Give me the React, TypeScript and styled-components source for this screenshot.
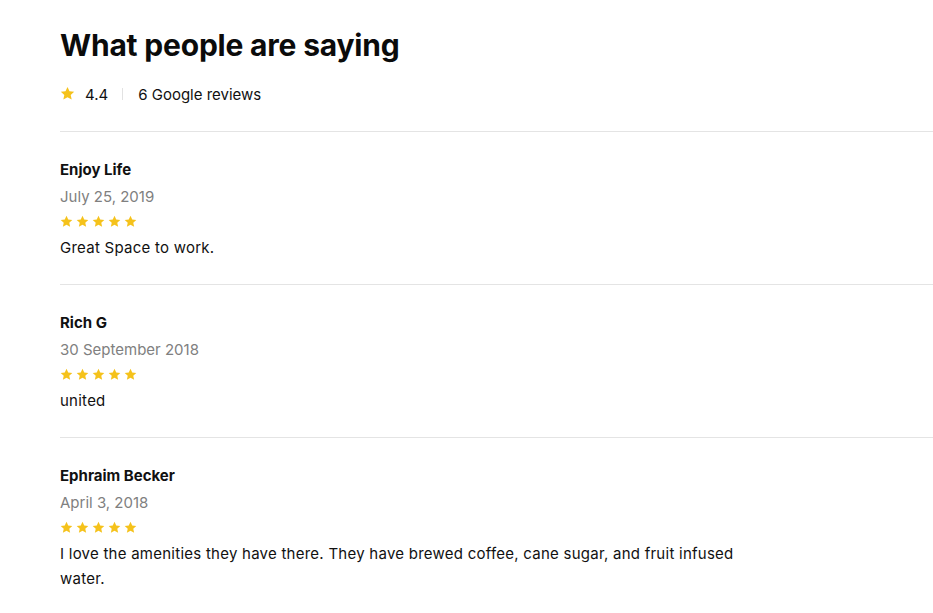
import React, { FC } from 'react';
import styled, { createGlobalStyle } from 'styled-components';

interface Review {
   author: string;
   date: string;
   rating: number;
   body: string;
}

const REVIEWS: Review[] = [
   { author: 'Enjoy Life', date: 'July 25, 2019', rating: 5, body: 'Great Space to work.' },
   { author: 'Rich G', date: '30 September 2018', rating: 5, body: 'united' },
   {
      author: 'Ephraim Becker',
      date: 'April 3, 2018',
      rating: 5,
      body: 'I love the amenities they have there. They have brewed coffee, cane sugar, and fruit infused water.'
   }
];

const Star: FC<{ size?: number }> = ({ size = 13 }) => (
   <svg width={size} height={size} viewBox='0 0 24 24'>
      <path
         fill='#f5c21b'
         d='M12 1.5l3.2 6.9 7.5.8-5.6 5.1 1.6 7.4L12 17.9l-6.7 3.8 1.6-7.4-5.6-5.1 7.5-.8z'
      />
   </svg>
);

const App: FC = (): JSX.Element => (
   <>
      <GlobalStyle />
      <Page>
         <Title>What people are saying</Title>
         <Summary>
            <Star size={15} />
            <Score>4.4</Score>
            <Pipe />
            <span>6 Google reviews</span>
         </Summary>
         <List>
            {REVIEWS.map(({ author, date, rating, body }, i) => (
               <Item key={i}>
                  <Author>{author}</Author>
                  <DateLine>{date}</DateLine>
                  <Stars>
                     {Array.from({ length: rating }).map((_, j) => (
                        <Star key={j} />
                     ))}
                  </Stars>
                  <Body>{body}</Body>
               </Item>
            ))}
         </List>
      </Page>
   </>
);

export default App;

const GlobalStyle = createGlobalStyle`
   body {
      margin: 0;
      background: #fff;
      color: #111;
      font-family: Inter, 'Noto Sans', sans-serif;
   }
`;

const Page = styled.div`
   padding: 27px 0 0 60px;
`;

const Title = styled.h1`
   margin: 0;
   font-size: 30px;
   line-height: 36px;
   font-weight: 700;
   letter-spacing: -0.2px;
   color: #0b0b0b;
`;

const Summary = styled.div`
   margin-top: 21px;
   display: flex;
   align-items: center;
   height: 20px;
   font-size: 15px;
   padding-bottom: 27px;
   border-bottom: 1px solid #e4e4e4;
   svg {
      margin-top: -2px;
   }
`;

const Score = styled.span`
   margin-left: 10px;
`;

const Pipe = styled.span`
   width: 1px;
   height: 12px;
   background: #e2e2e2;
   margin: 0 15px 0 14px;
`;

const List = styled.ul`
   list-style: none;
   margin: 0;
   padding: 0;
`;

const Item = styled.li`
   display: flex;
   flex-direction: column;
   padding: 28px 0 24px;
   border-bottom: 1px solid #e4e4e4;
   font-size: 15px;
   &:last-child {
      border-bottom: none;
   }
`;

const Author = styled.div`
   font-weight: 700;
   line-height: 20px;
`;

const DateLine = styled.div`
   margin-top: 7px;
   line-height: 20px;
   color: #808080;
`;

const Stars = styled.div`
   margin-top: 8px;
   display: flex;
   gap: 3px;
   height: 13px;
`;

const Body = styled.p`
   margin: 7px 0 0;
   line-height: 25px;
   letter-spacing: 0.25px;
   max-width: 690px;
`;
